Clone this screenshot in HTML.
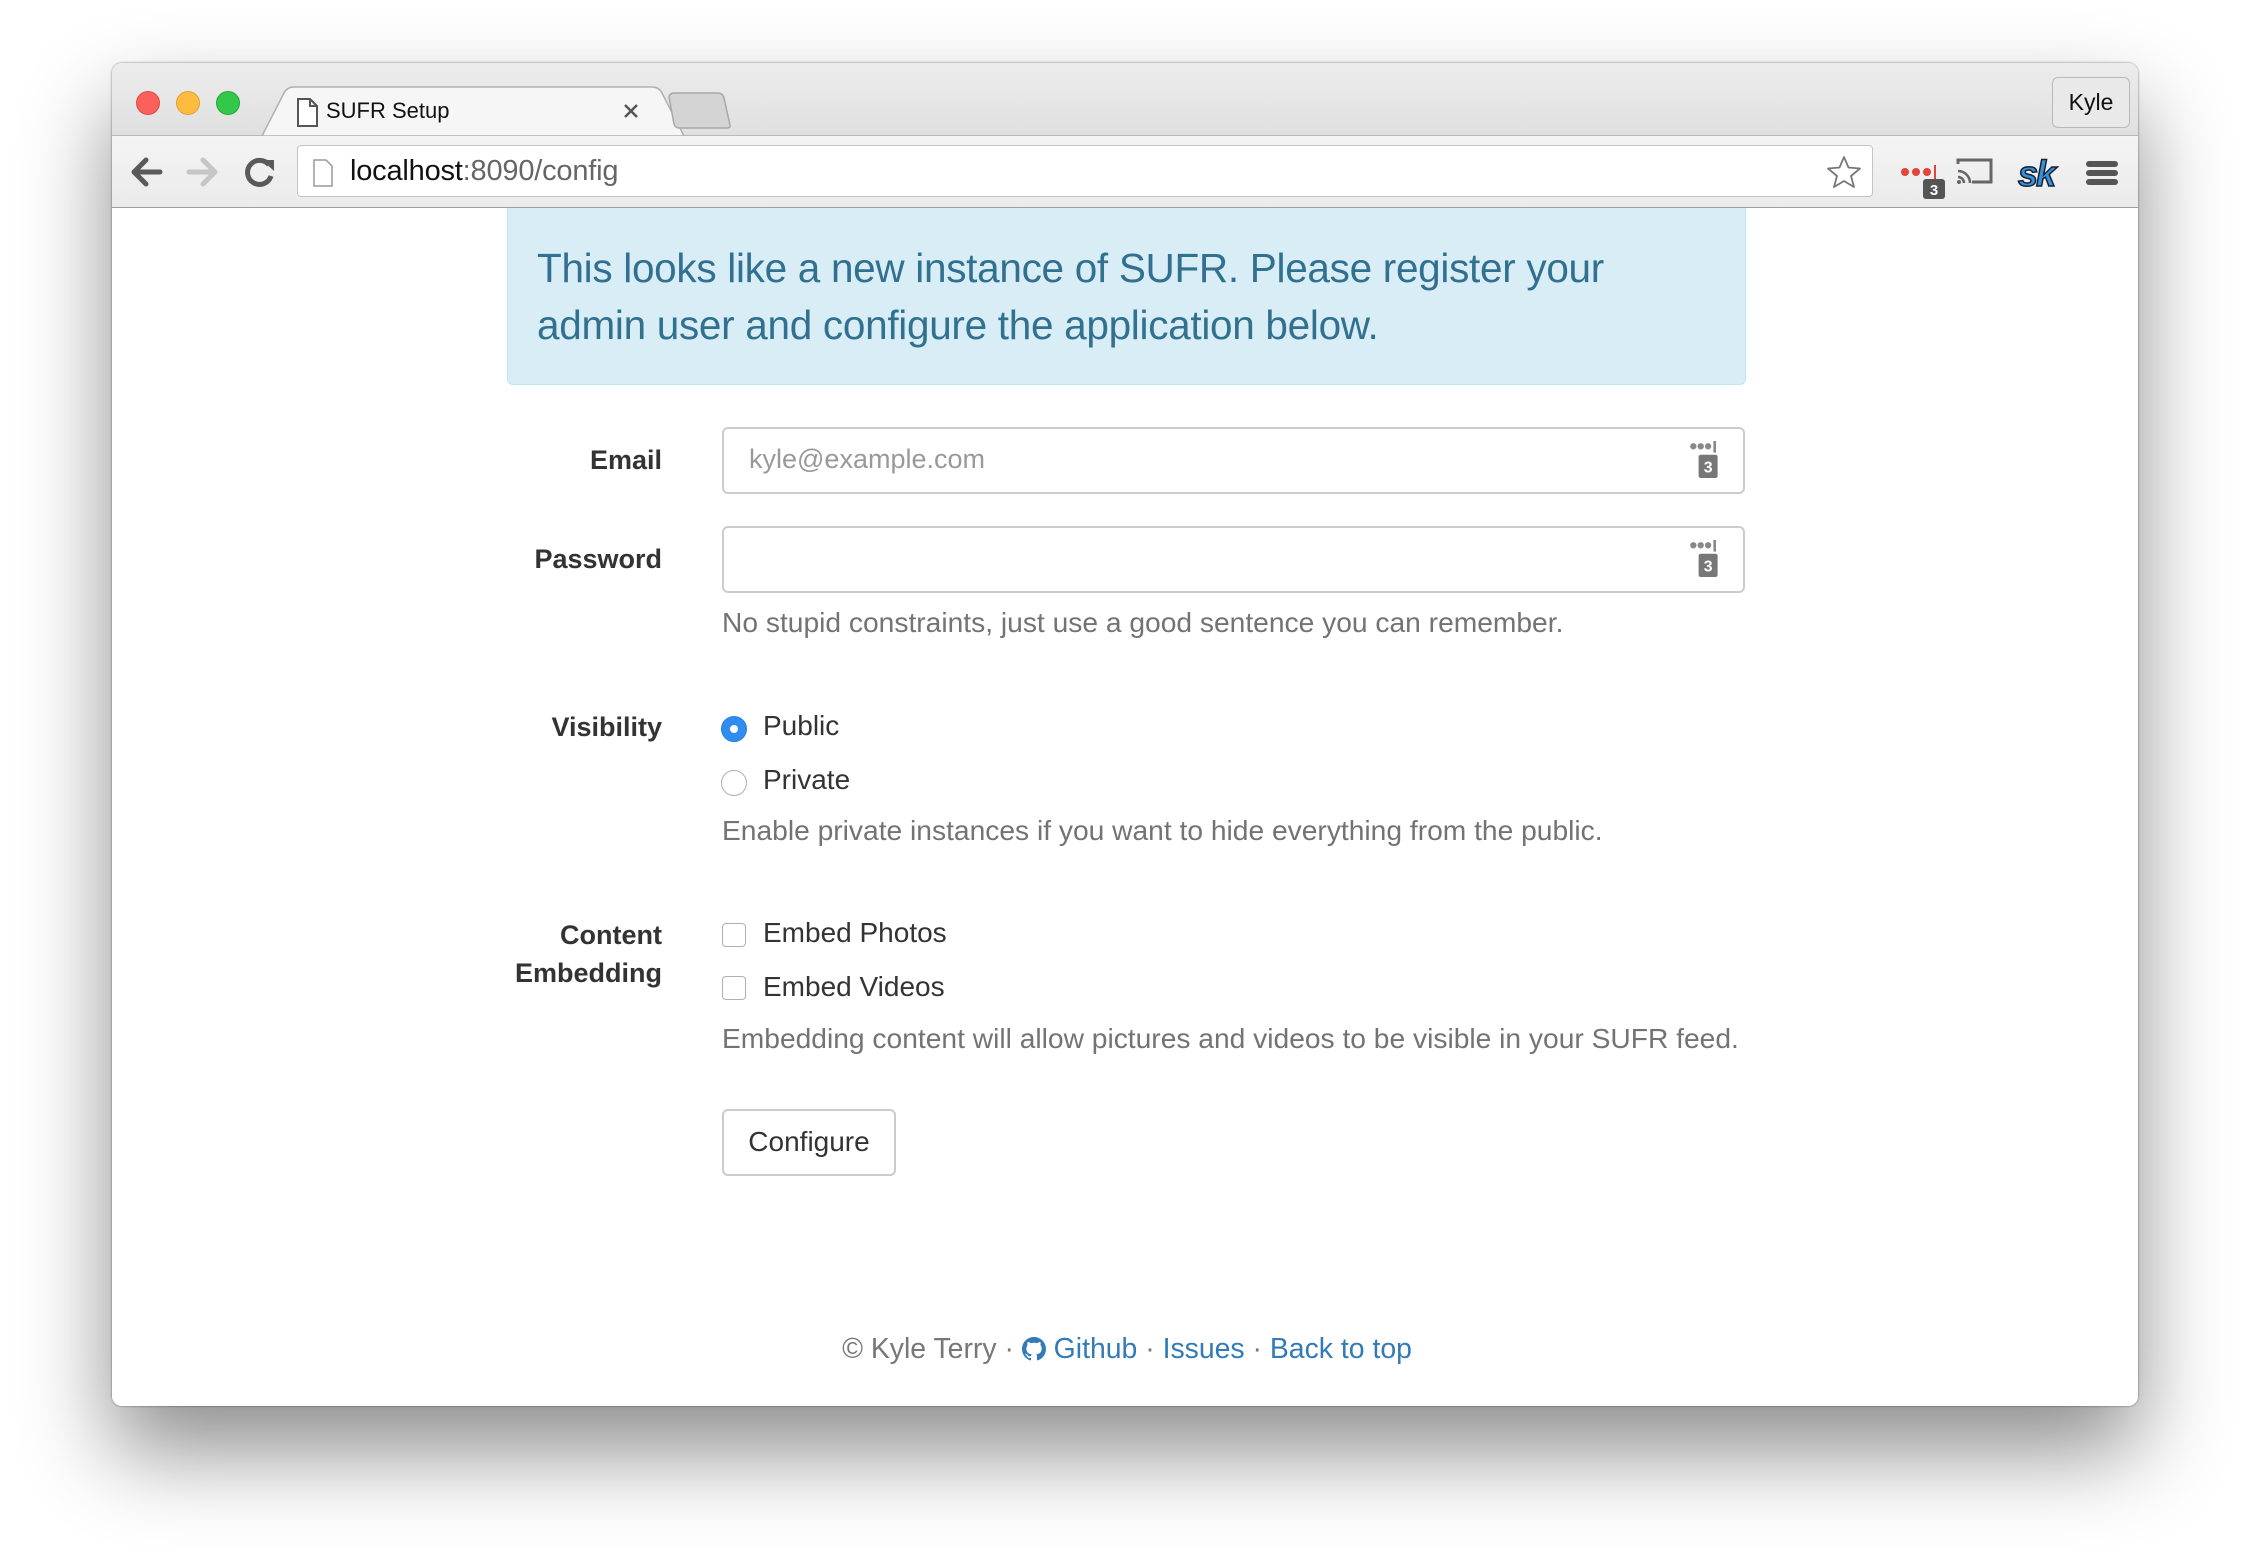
<!DOCTYPE html>
<html><head><meta charset="utf-8">
<style>
*{box-sizing:border-box;margin:0;padding:0}
body{width:2250px;height:1566px;background:#fff;position:relative;overflow:hidden;font-family:"Liberation Sans",Arial,sans-serif}
.win{position:absolute;left:112px;top:63px;width:2026px;height:1343px;border-radius:10px;background:#fff;box-shadow:0 45px 90px rgba(0,0,0,.45),0 0 2px rgba(0,0,0,.5);overflow:hidden}
.tabbar{position:absolute;left:0;top:0;width:100%;height:73px;background:linear-gradient(#ececec,#e0e0e0);border-bottom:1px solid #b8b8b8}
.light{position:absolute;top:28px;width:24px;height:24px;border-radius:50%}
.toolbar{position:absolute;left:0;top:73px;width:100%;height:72px;background:linear-gradient(#f4f4f4,#ebebeb);border-bottom:1px solid #9e9e9e}
.url{position:absolute;left:185px;top:9px;width:1576px;height:52px;background:#fff;border:1px solid #c4c4c4;border-radius:4px}
.content{position:absolute;left:0;top:145px;width:100%;bottom:0;background:#fff}
.alert{position:absolute;left:395px;top:0;width:1239px;height:177px;background:#d9edf7;border:1px solid #bce8f1;border-top:none;border-radius:0 0 6px 6px;color:#31708f;font-size:40.5px;line-height:57px;padding:32px 0 0 29px;letter-spacing:-0.3px}
.lbl{position:absolute;right:1476px;font-weight:bold;color:#333;font-size:27px;text-align:right;line-height:38px}
.inp{position:absolute;left:610px;width:1023px;height:67px;border:2px solid #ccc;border-radius:6px;background:#fff}
.help{position:absolute;left:610px;color:#737373;font-size:28.2px;white-space:nowrap}
.opt{position:absolute;left:651px;color:#333;font-size:28px}
.radio{position:absolute;left:609px;width:26px;height:26px;border-radius:50%;border:1.5px solid #b0b0b0;background:#fff}
.chk{position:absolute;left:610px;width:24px;height:24px;border-radius:4px;border:1.5px solid #b0b0b0;background:#fff}
.ext{position:absolute;right:20px;top:12px;width:34px;height:38px}
</style></head><body>
<div class="win">
 <div class="tabbar">
  <div class="light" style="left:24px;background:#fc605c;border:1px solid #de4a46"></div>
  <div class="light" style="left:64px;background:#fdbc40;border:1px solid #dea236"></div>
  <div class="light" style="left:104px;background:#34c84a;border:1px solid #27a63a"></div>
  <svg style="position:absolute;left:0;top:0" width="2026" height="74">
   <path d="M150 73 L172 30 Q175 24 182 24 L540 24 Q547 24 550 30 L572 73 Z" fill="#f6f6f6" stroke="#b0b0b0" stroke-width="1.5"/>
   <path d="M557 34 Q558 30 562 30 L606 30 Q611 30 612 35 L618 62 Q619 65 614 65 L568 65 Q563 65 562 61 Z" fill="#d4d4d4" stroke="#a8a8a8" stroke-width="1.5"/>
   <path d="M186 36 h12 l7 7 v20 h-19 z M198 36 v7 h7" fill="#fff" stroke="#555" stroke-width="2"/>
   <path d="M513 42 l12 12 M525 42 l-12 12" stroke="#555" stroke-width="2.5"/>
  </svg>
  <div style="position:absolute;left:214px;top:35px;font-size:22px;color:#111">SUFR Setup</div>
  <div style="position:absolute;left:1940px;top:14px;width:78px;height:51px;border:1px solid #b8b8b8;border-radius:6px;font-size:23px;color:#111;text-align:center;line-height:49px;background:#e9e9e9">Kyle</div>
 </div>
 <div class="toolbar">
  <svg style="position:absolute;left:0;top:0" width="300" height="72">
   <path d="M22 36 H48 M34 24 L22 36 L34 48" fill="none" stroke="#5a5a5a" stroke-width="5" stroke-linecap="round" stroke-linejoin="round"/>
   <path d="M77 36 H103 M91 24 L103 36 L91 48" fill="none" stroke="#c6c6c6" stroke-width="5" stroke-linecap="round" stroke-linejoin="round"/>
   <path d="M157 29 A12 12 0 1 0 159 40" fill="none" stroke="#5a5a5a" stroke-width="5"/>
   <path d="M150 24 L162 24 L162 35 Z" fill="#5a5a5a"/>
  </svg>
  <div class="url">
   <svg style="position:absolute;left:14px;top:13px" width="22" height="28"><path d="M2 1 h12 l6 6 v20 h-18 z" fill="#fff" stroke="#999" stroke-width="1.5"/></svg>
   <div style="position:absolute;left:52px;top:9px;font-size:29px;color:#111;letter-spacing:-0.2px">localhost<span style="color:#666">:8090/config</span></div>
   <svg style="position:absolute;right:10px;top:9px" width="36" height="34"><path d="M18 2 L22.5 12.5 L34 13.5 L25 21 L28 32 L18 26 L8 32 L11 21 L2 13.5 L13.5 12.5 Z" fill="#fff" stroke="#777" stroke-width="1.8" stroke-linejoin="round"/></svg>
  </div>
  <svg style="position:absolute;left:1780px;top:0" width="246" height="72">
   <circle cx="13" cy="36" r="4" fill="#e2453c"/><circle cx="24" cy="36" r="4" fill="#e2453c"/><circle cx="35" cy="36" r="4" fill="#e2453c"/><rect x="42" y="29" width="2" height="14" fill="#e2453c"/>
   <rect x="31" y="43" width="22" height="20" rx="3" fill="#555"/><text x="42" y="59" font-size="15" font-weight="bold" fill="#fff" text-anchor="middle" font-family="Liberation Sans">3</text>
   <path d="M66 28 V24 H99 V46 H80" fill="none" stroke="#666" stroke-width="3"/>
   <path d="M66 35 A12 12 0 0 1 78 47 M66 41 A6 6 0 0 1 72 47" fill="none" stroke="#666" stroke-width="2.5"/><circle cx="67" cy="46" r="2" fill="#666"/>
   <text x="126" y="50" font-size="36" font-weight="bold" font-style="italic" fill="#3a8fd6" stroke="#123" stroke-width="1.5" font-family="Liberation Sans" letter-spacing="-2">sk</text>
   <rect x="194" y="25" width="32" height="6" rx="3" fill="#555"/><rect x="194" y="34" width="32" height="6" rx="3" fill="#555"/><rect x="194" y="43" width="32" height="6" rx="3" fill="#555"/>
  </svg>
 </div>
 <div class="content">
  <div class="alert">This looks like a new instance of SUFR. Please register your<br>admin user and configure the application below.</div>

  <div class="lbl" style="top:233px">Email</div>
  <div class="inp" style="top:219px"><div style="position:absolute;left:25px;top:15px;font-size:27px;color:#999">kyle@example.com</div>
   <svg class="ext" viewBox="0 0 32 36"><circle cx="4" cy="5" r="3" fill="#888"/><circle cx="11" cy="5" r="3" fill="#888"/><circle cx="18" cy="5" r="3" fill="#888"/><rect x="23" y="0" width="2.5" height="11" fill="#888"/><rect x="9" y="13" width="18" height="22" rx="2" fill="#777"/><text x="18" y="30" font-size="15" font-weight="bold" fill="#fff" text-anchor="middle" font-family="Liberation Sans">3</text></svg>
  </div>
  <div class="lbl" style="top:332px">Password</div>
  <div class="inp" style="top:318px">
   <svg class="ext" viewBox="0 0 32 36"><circle cx="4" cy="5" r="3" fill="#888"/><circle cx="11" cy="5" r="3" fill="#888"/><circle cx="18" cy="5" r="3" fill="#888"/><rect x="23" y="0" width="2.5" height="11" fill="#888"/><rect x="9" y="13" width="18" height="22" rx="2" fill="#777"/><text x="18" y="30" font-size="15" font-weight="bold" fill="#fff" text-anchor="middle" font-family="Liberation Sans">3</text></svg>
  </div>
  <div class="help" style="top:398px">No stupid constraints, just use a good sentence you can remember.</div>

  <div class="lbl" style="top:500px">Visibility</div>
  <div class="radio" style="top:508px;background:#2f8cf0;border-color:#2a7fe0"><div style="position:absolute;left:8px;top:8px;width:8px;height:8px;border-radius:50%;background:#fff"></div></div>
  <div class="opt" style="top:502px">Public</div>
  <div class="radio" style="top:562px"></div>
  <div class="opt" style="top:556px">Private</div>
  <div class="help" style="top:606px">Enable private instances if you want to hide everything from the public.</div>

  <div class="lbl" style="top:708px">Content<br>Embedding</div>
  <div class="chk" style="top:715px"></div>
  <div class="opt" style="top:709px">Embed Photos</div>
  <div class="chk" style="top:768px"></div>
  <div class="opt" style="top:763px">Embed Videos</div>
  <div class="help" style="top:814px">Embedding content will allow pictures and videos to be visible in your SUFR feed.</div>

  <div style="position:absolute;left:610px;top:901px;width:174px;height:67px;border:2px solid #ccc;border-radius:6px;font-size:28px;color:#333;text-align:center;line-height:62px">Configure</div>

  <div style="position:absolute;left:0;width:100%;top:1125px;text-align:center;font-size:28.4px;color:#777;padding-left:4px">© Kyle Terry · <span style="color:#337ab7"><svg width="24" height="24" viewBox="0 0 16 16" style="vertical-align:-3px"><path fill="#337ab7" d="M8 0C3.58 0 0 3.58 0 8c0 3.54 2.29 6.53 5.47 7.59.4.07.55-.17.55-.38v-1.33c-2.23.48-2.7-1.07-2.7-1.07-.36-.92-.89-1.17-.89-1.17-.73-.5.05-.49.05-.49.8.06 1.23.83 1.23.83.72 1.22 1.88.87 2.33.66.07-.52.28-.87.51-1.07-1.78-.2-3.64-.89-3.64-3.95 0-.87.31-1.59.82-2.15-.08-.2-.36-1.02.08-2.12 0 0 .67-.21 2.2.82A7.6 7.6 0 0 1 8 3.87c.68 0 1.36.09 2 .27 1.53-1.04 2.2-.82 2.2-.82.44 1.1.16 1.92.08 2.12.51.56.82 1.27.82 2.15 0 3.07-1.87 3.75-3.65 3.95.29.25.54.73.54 1.48v2.2c0 .21.15.46.55.38A8.01 8.01 0 0 0 16 8c0-4.42-3.58-8-8-8z"/></svg> Github</span> · <span style="color:#337ab7">Issues</span> · <span style="color:#337ab7">Back to top</span></div>
 </div>
</div>
</body></html>
